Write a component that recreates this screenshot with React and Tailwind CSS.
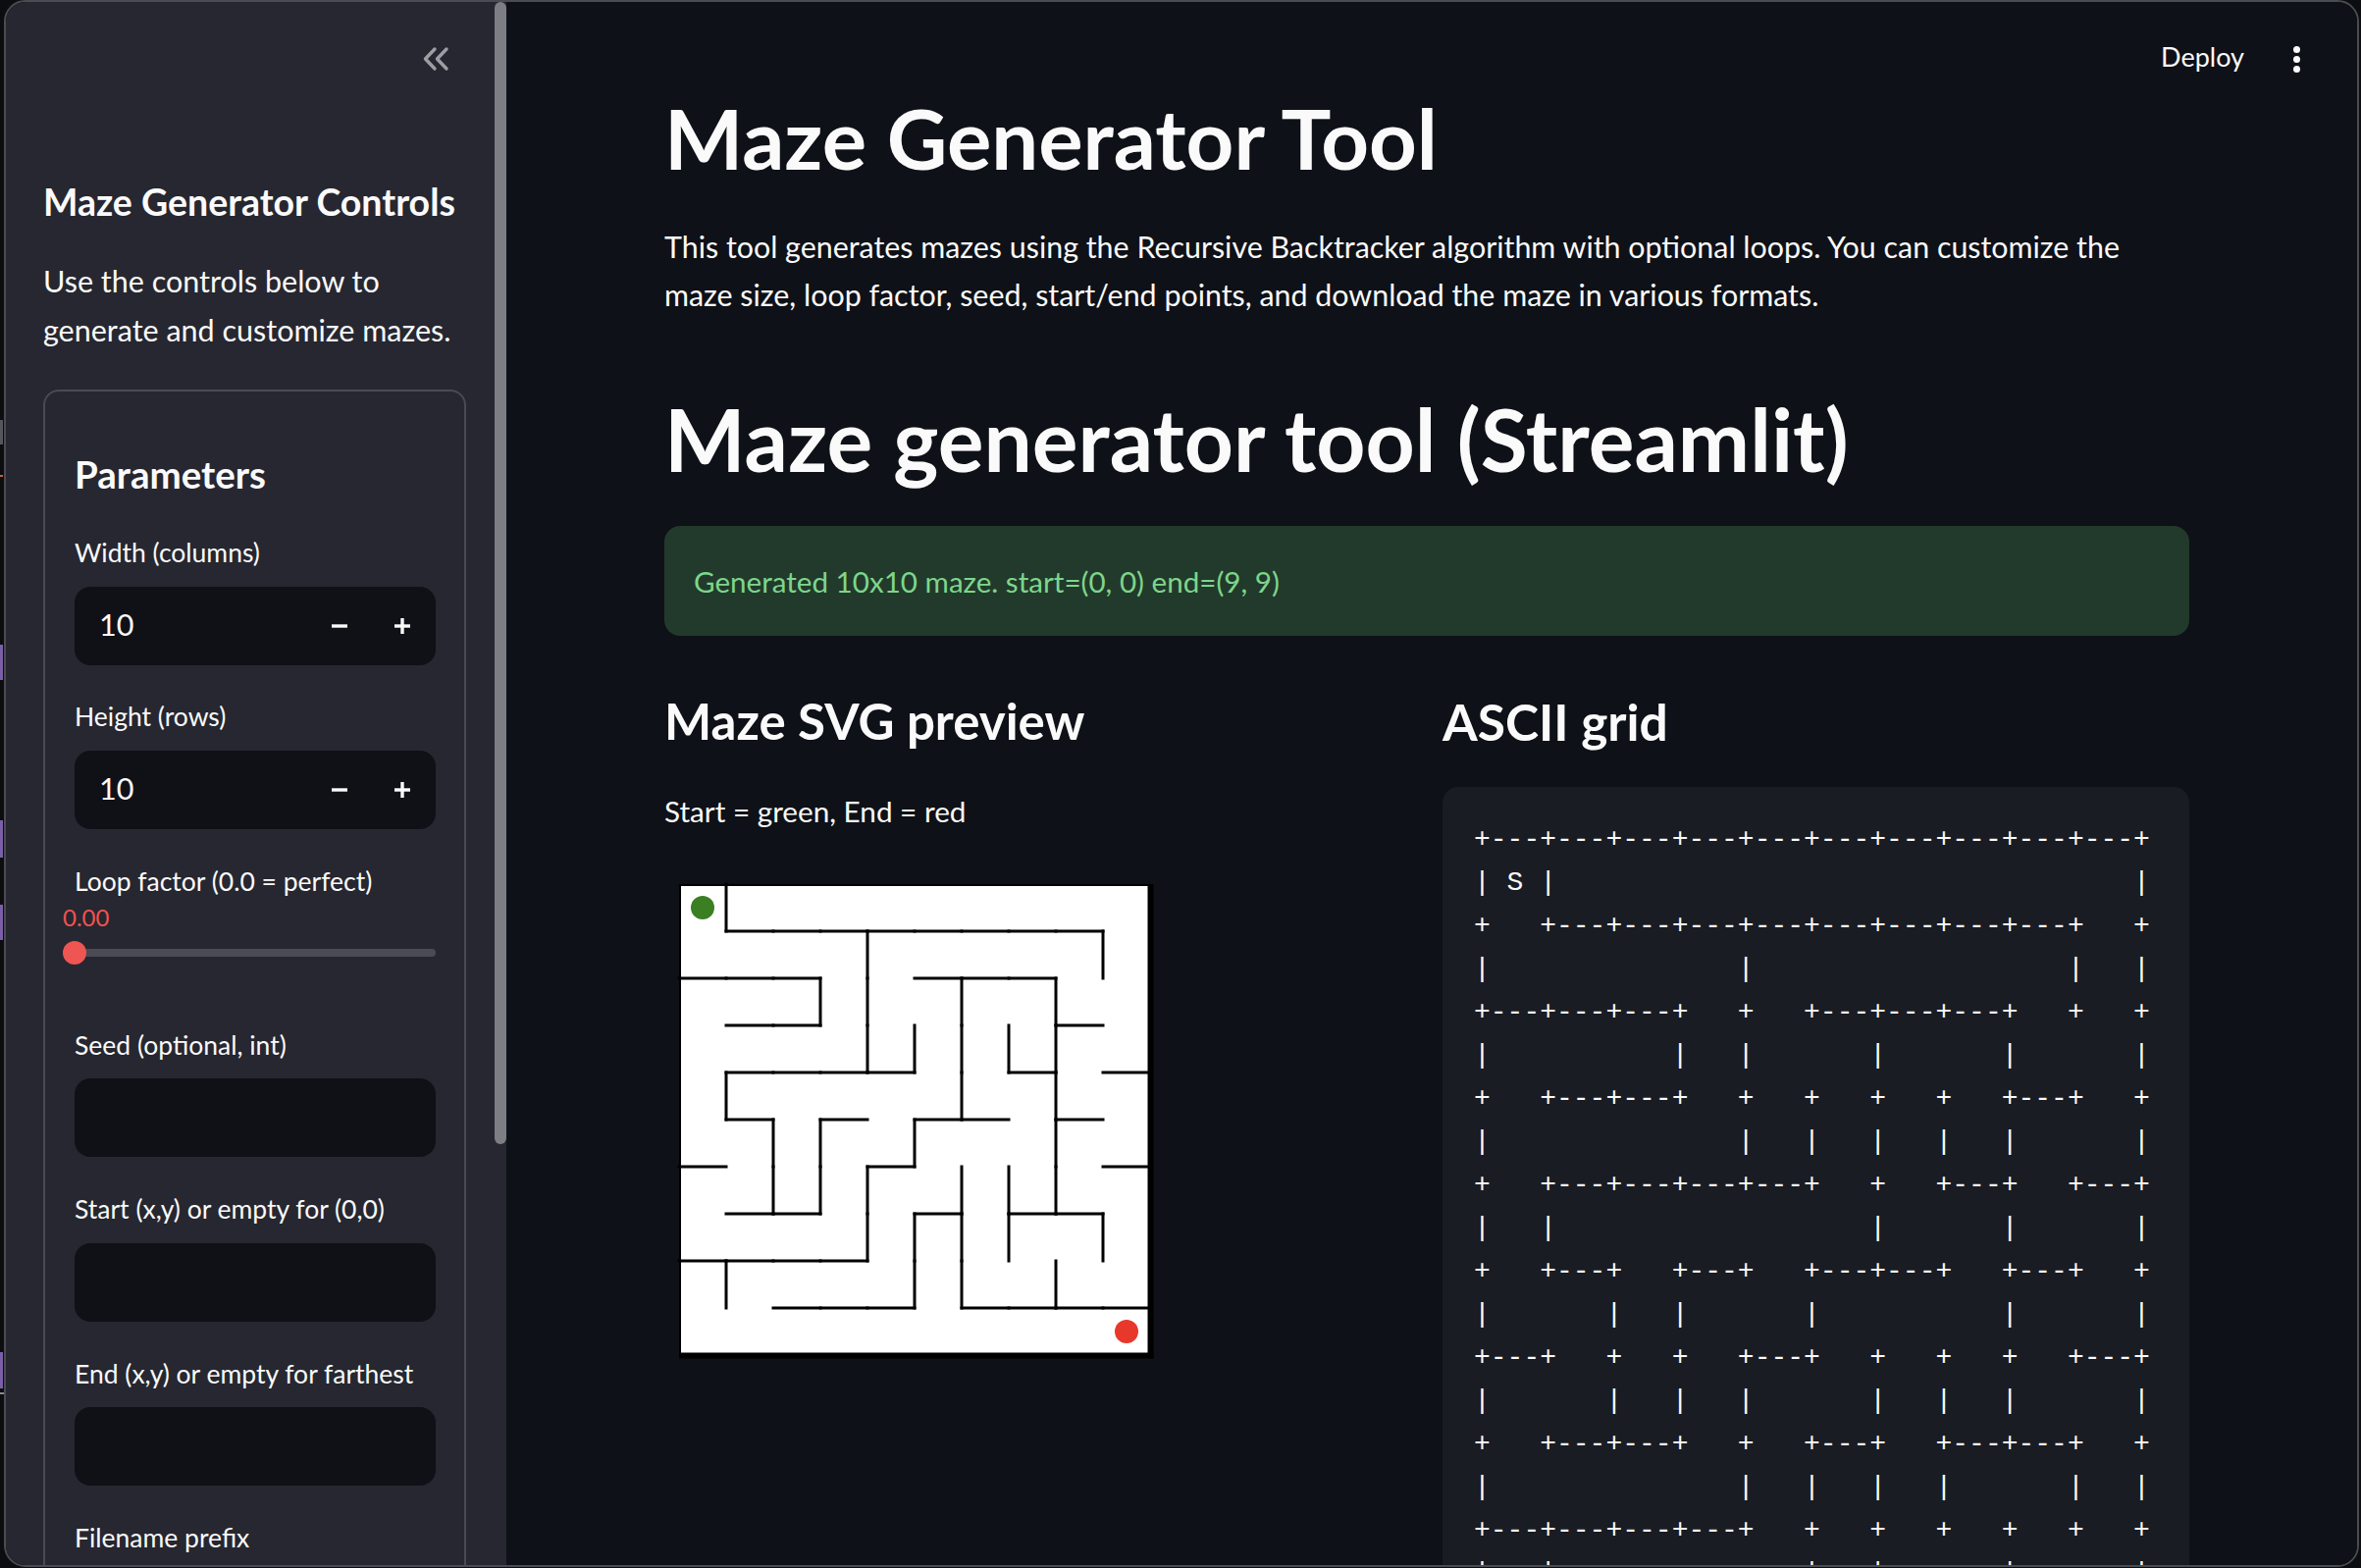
import React from "react";

const N = 10;
const HW = {
  1: [1, 2, 3, 4, 5, 6, 7, 8],
  2: [0, 1, 2, 5, 6, 7],
  3: [1, 2, 8],
  4: [1, 2, 3, 4, 7, 9],
  5: [1, 3, 5, 6, 8],
  6: [0, 4, 9],
  7: [1, 2, 5, 7, 8],
  8: [0, 1, 2, 3],
  9: [2, 3, 4, 6, 7, 8, 9],
};
const VW = [
  [1],
  [4, 9],
  [3, 4, 6, 8],
  [4, 5, 6, 7, 8],
  [1, 6, 8],
  [2, 3, 5, 8],
  [2, 3, 4, 6, 7, 8],
  [4, 5, 6, 7, 9],
  [1, 5, 6, 8],
  [],
];
const hasH = (j, c) => (j === 0 || j === N ? true : HW[j].includes(c));
const hasV = (r, i) => (i === 0 || i === N ? true : VW[r].includes(i));

function buildAscii() {
  const lines = [];
  for (let j = 0; j <= N; j++) {
    let s = "";
    for (let c = 0; c < N; c++) s += "+" + (hasH(j, c) ? "---" : "   ");
    s += "+";
    lines.push(s);
    if (j < N) {
      let t = "";
      for (let i = 0; i <= N; i++) {
        t += hasV(j, i) ? "|" : " ";
        if (i < N) {
          if (j === 0 && i === 0) t += " S ";
          else if (j === N - 1 && i === N - 1) t += " E ";
          else t += "   ";
        }
      }
      lines.push(t);
    }
  }
  return lines.join("\n");
}

function MazeSvg() {
  const o = 2;
  const c = 48;
  const segs = [];
  for (let j = 1; j < N; j++) {
    HW[j].forEach((col) => {
      segs.push([o + col * c, o + j * c, o + (col + 1) * c, o + j * c]);
    });
  }
  VW.forEach((list, r) => {
    list.forEach((i) => {
      segs.push([o + i * c, o + r * c, o + i * c, o + (r + 1) * c]);
    });
  });
  return (
    <svg width="487" height="487" viewBox="0 0 487 487">
      <rect x="2" y="2" width="480" height="480" fill="#ffffff" />
      {segs.map((s, k) => (
        <line
          key={k}
          x1={s[0]}
          y1={s[1]}
          x2={s[2]}
          y2={s[3]}
          stroke="#000"
          strokeWidth="3"
          strokeLinecap="square"
        />
      ))}
      <rect x="2" y="2" width="482" height="2" fill="#000" />
      <rect x="2" y="2" width="2" height="483" fill="#000" />
      <rect x="479.5" y="2" width="6" height="483.5" fill="#000" />
      <rect x="2" y="479.5" width="483.5" height="6" fill="#000" />
      <circle cx="26" cy="26" r="12" fill="#3b7f23" />
      <circle cx="458" cy="458" r="12" fill="#e8382b" />
    </svg>
  );
}

function Label({ children, className = "" }) {
  return (
    <div className={"text-[26.5px] leading-[34px] text-[#fafafa] " + className}>
      {children}
    </div>
  );
}

function NumberInput({ value }) {
  return (
    <div className="mt-[17.5px] w-[368px] h-[80px] rounded-[16px] bg-[#101117] flex items-center">
      <span className="flex-1 pl-[25px] pb-[3px] text-[30.5px] leading-[40px] text-[#fafafa]">
        {value}
      </span>
      <div className="w-[64px] h-full flex items-center justify-center">
        <svg width="16" height="16" viewBox="0 0 16 16">
          <rect x="0" y="6.3" width="16" height="3.4" fill="#fafafa" />
        </svg>
      </div>
      <div className="w-[64px] h-full flex items-center justify-center">
        <svg width="16" height="16" viewBox="0 0 16 16">
          <rect x="0" y="6.3" width="16" height="3.4" fill="#fafafa" />
          <rect x="6.3" y="0" width="3.4" height="16" fill="#fafafa" />
        </svg>
      </div>
      <div className="w-[2px]" />
    </div>
  );
}

function TextInput() {
  return <div className="mt-[17.5px] w-[368px] h-[80px] rounded-[16px] bg-[#101117]" />;
}

export default function App() {
  const ascii = buildAscii();
  return (
    <div className="w-[2406px] h-[1598px] bg-[#0c0d10] overflow-hidden relative font-['Lato',sans-serif] text-[#fafafa]">
      {/* background desktop marks on the far left */}
      <div className="absolute left-0 top-[657px] w-[3px] h-[36px] bg-[#7a5fa8]" />
      <div className="absolute left-0 top-[836px] w-[3px] h-[38px] bg-[#7a5fa8]" />
      <div className="absolute left-0 top-[922px] w-[3px] h-[36px] bg-[#7a5fa8]" />
      <div className="absolute left-0 top-[1378px] w-[3px] h-[37px] bg-[#7a5fa8]" />
      <div className="absolute left-0 top-[428px] w-[3px] h-[25px] bg-[#55565b]" />
      <div className="absolute left-0 top-[484px] w-[3px] h-[2px] bg-[#c0643c]" />
      <div className="absolute left-0 top-[1419px] w-[4px] h-[2px] bg-[#8a8b90]" />

      <div className="ml-[4px] w-[2400px] h-[1597px] rounded-[22px] border-2 border-[#4b4c51] overflow-hidden flex">
        {/* Sidebar */}
        <div className="relative w-[510px] shrink-0 h-full bg-[#262730] overflow-hidden flex flex-col">
          <div className="absolute right-0 top-0 w-[12px] h-[1164px] rounded-full bg-[#7d7e84]" />

          <div className="flex justify-end pt-[45px] pr-[57px]">
            <svg width="30" height="26" viewBox="0 0 30 26" fill="none">
              <path d="M14 3 L4.5 13 L14 23" stroke="#9d9ea3" strokeWidth="3.4" strokeLinecap="round" strokeLinejoin="round" />
              <path d="M26 3 L16.5 13 L26 23" stroke="#9d9ea3" strokeWidth="3.4" strokeLinecap="round" strokeLinejoin="round" />
            </svg>
          </div>

          <h2 className="mt-[110px] ml-[38px] text-[37.5px] leading-[46px] font-bold">
            Maze Generator Controls
          </h2>
          <p className="mt-[32px] ml-[38px] text-[30.5px] leading-[50px]">
            Use the controls below to
            <br />
            generate and customize mazes.
          </p>

          <div className="mt-[36px] ml-[38px] w-[431px] h-[1400px] shrink-0 border-2 border-[#4a4b52] rounded-[16px] pl-[30px] pt-[61px] flex flex-col">
            <h3 className="text-[38.5px] leading-[46px] font-bold">Parameters</h3>

            <Label className="mt-[40px]">Width (columns)</Label>
            <NumberInput value="10" />

            <Label className="mt-[35.5px]">Height (rows)</Label>
            <NumberInput value="10" />

            <Label className="mt-[36.5px]">Loop factor (0.0 = perfect)</Label>
            <div className="mt-[6px] ml-[-12px] text-[24px] leading-[28px] text-[#ef5350]">0.00</div>
            <div className="mt-[10px] ml-[-12px] w-[380px] h-[24px] relative flex items-center">
              <div className="w-full h-[8px] rounded-full bg-[#4a4b55]" />
              <div className="absolute left-0 top-0 w-[24px] h-[24px] rounded-full bg-[#ef5552]" />
            </div>

            <Label className="mt-[64.5px]">Seed (optional, int)</Label>
            <TextInput />

            <Label className="mt-[36px]">Start (x,y) or empty for (0,0)</Label>
            <TextInput />

            <Label className="mt-[36px]">End (x,y) or empty for farthest</Label>
            <TextInput />

            <Label className="mt-[36px]">Filename prefix</Label>
            <TextInput />
          </div>
        </div>

        {/* Main */}
        <div className="flex-1 h-full bg-[#0e1117] overflow-hidden flex flex-col">
          <div className="h-[88px] shrink-0 flex justify-end items-start pt-[39px] pr-[58px]">
            <span className="text-[27px] leading-[34px]">Deploy</span>
            <div className="ml-[50px] mt-[5.5px] flex flex-col gap-[3px]">
              <div className="w-[7px] h-[7px] rounded-full bg-[#fafafa]" />
              <div className="w-[7px] h-[7px] rounded-full bg-[#fafafa]" />
              <div className="w-[7px] h-[7px] rounded-full bg-[#fafafa]" />
            </div>
          </div>

          <div className="ml-[161px] w-[1554px] flex flex-col shrink-0">
            <h1 className="text-[85px] leading-[100px] font-bold">Maze Generator Tool</h1>
            <p className="mt-[37px] text-[30.4px] leading-[49px]">
              This tool generates mazes using the Recursive Backtracker algorithm with optional loops. You can customize the
              <br />
              maze size, loop factor, seed, start/end points, and download the maze in various formats.
            </p>
            <h1 className="mt-[73px] text-[87.5px] leading-[100px] font-bold">
              Maze generator tool (Streamlit)
            </h1>
            <div className="mt-[38px] h-[112px] rounded-[16px] bg-[#223a2b] pl-[30px] flex items-center">
              <span className="text-[29.6px] leading-[49px] text-[#7dd68c]">
                Generated 10x10 maze. start=(0, 0) end=(9, 9)
              </span>
            </div>

            <div className="mt-[55px] grid grid-cols-2 gap-[32px]">
              <div className="flex flex-col">
                <h3 className="text-[51px] leading-[64px] font-bold">Maze SVG preview</h3>
                <p className="mt-[35px] text-[29.7px] leading-[49px]">Start = green, End = red</p>
                <div className="mt-[47.5px] ml-[13px]">
                  <MazeSvg />
                </div>
              </div>
              <div className="flex flex-col">
                <h3 className="text-[51.5px] leading-[64px] font-bold">ASCII grid</h3>
                <div className="mt-[35px] rounded-[16px] bg-[#1a1c23] p-[32px]">
                  <pre className="font-['Liberation_Mono',monospace] text-[28px] leading-[44px] text-[#fafafa] m-0">
                    {ascii}
                  </pre>
                </div>
              </div>
            </div>
          </div>
        </div>
      </div>
    </div>
  );
}
